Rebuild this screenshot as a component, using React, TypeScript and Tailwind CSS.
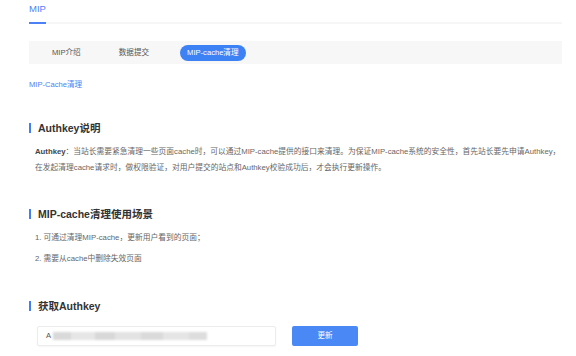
const font = "font-['Liberation_Sans','Noto_Sans_CJK_SC',sans-serif]";

const Heading = ({ children }: { children: React.ReactNode }) => (
  <div className="flex items-center h-[14px]">
    <span className="w-[2px] h-[10px] bg-[#3f7ff6]" />
    <h2 className="ml-[7px] text-[10.5px] leading-[14px] font-bold text-[#333]">{children}</h2>
  </div>
);

const App = () => {
  return (
    <div className={`${font} w-[576px] h-[356px] bg-white overflow-hidden pl-[29px] pr-[14px]`}>
      {/* Header */}
      <div className="flex border-b-2 border-[#f6f6f7]">
        <span className="pt-[3px] pb-[7px] leading-[12px] text-[9.5px] text-[#4e80f5] border-b-2 border-[#4e80f5] -mb-[2px]">
          MIP
        </span>
      </div>

      {/* Tabs */}
      <div className="mt-[17px] h-[23px] bg-[#f7f7f7] flex items-center pl-[16px] gap-[24px] text-[7.6px] text-[#555]">
        <span className="px-[7px] leading-[16px]">MIP介绍</span>
        <span className="px-[7px] leading-[16px]">数据提交</span>
        <span className="px-[7px] h-[16px] leading-[16px] rounded-full bg-[#3d82f5] text-white">MIP-cache清理</span>
      </div>

      <div className="mt-[16px] text-[7.6px] leading-[10px] text-[#4e80f5]">MIP-Cache清理</div>

      {/* Section 1 */}
      <div className="mt-[31px]">
        <Heading>Authkey说明</Heading>
      </div>
      <p className="mt-[9px] pl-[6px] text-[7.75px] leading-[16px] text-[#666]">
        <b className="text-[#444]">Authkey</b>：当站长需要紧急清理一些页面cache时，可以通过MIP-cache提供的接口来清理。为保证MIP-cache系统的安全性，首先站长要先申请Authkey，
        <br />
        在发起清理cache请求时，做权限验证，对用户提交的站点和Authkey校验成功后，才会执行更新操作。
      </p>

      {/* Section 2 */}
      <div className="mt-[31px]">
        <Heading>MIP-cache清理使用场景</Heading>
      </div>
      <ol className="mt-[9px] pl-[6px] text-[7.75px] leading-[16px] text-[#666]">
        <li>1. 可通过清理MIP-cache，更新用户看到的页面；</li>
        <li className="mt-[5px]">2. 需要从cache中删除失效页面</li>
      </ol>

      {/* Section 3 */}
      <div className="mt-[32px]">
        <Heading>获取Authkey</Heading>
      </div>
      <div className="mt-[13px] pl-[8px] flex items-center">
        <div className="w-[239px] h-[20px] border border-[#ececec] rounded-[2px] bg-white shadow-[0_1px_2px_rgba(0,0,0,0.04)] flex items-center pl-[8px] text-[7.6px] text-[#555]">
          <span>A</span>
          <div className="flex items-center ml-[2px] blur-[1px]">
            <span className="w-[18px] h-[8px] bg-[#d9d9d9]" />
            <span className="w-[24px] h-[8px] bg-[#e6e6e6]" />
            <span className="w-[20px] h-[8px] bg-[#d8d8d8]" />
            <span className="w-[26px] h-[8px] bg-[#e3e3e3]" />
            <span className="w-[22px] h-[8px] bg-[#dadada]" />
            <span className="w-[26px] h-[8px] bg-[#e5e5e5]" />
            <span className="w-[18px] h-[8px] bg-[#dddddd]" />
          </div>
        </div>
        <button className="ml-[16px] w-[66px] h-[20px] rounded-[2px] bg-[#4a88f6] text-white text-[7.6px]">更新</button>
      </div>
    </div>
  );
};

export default App;
